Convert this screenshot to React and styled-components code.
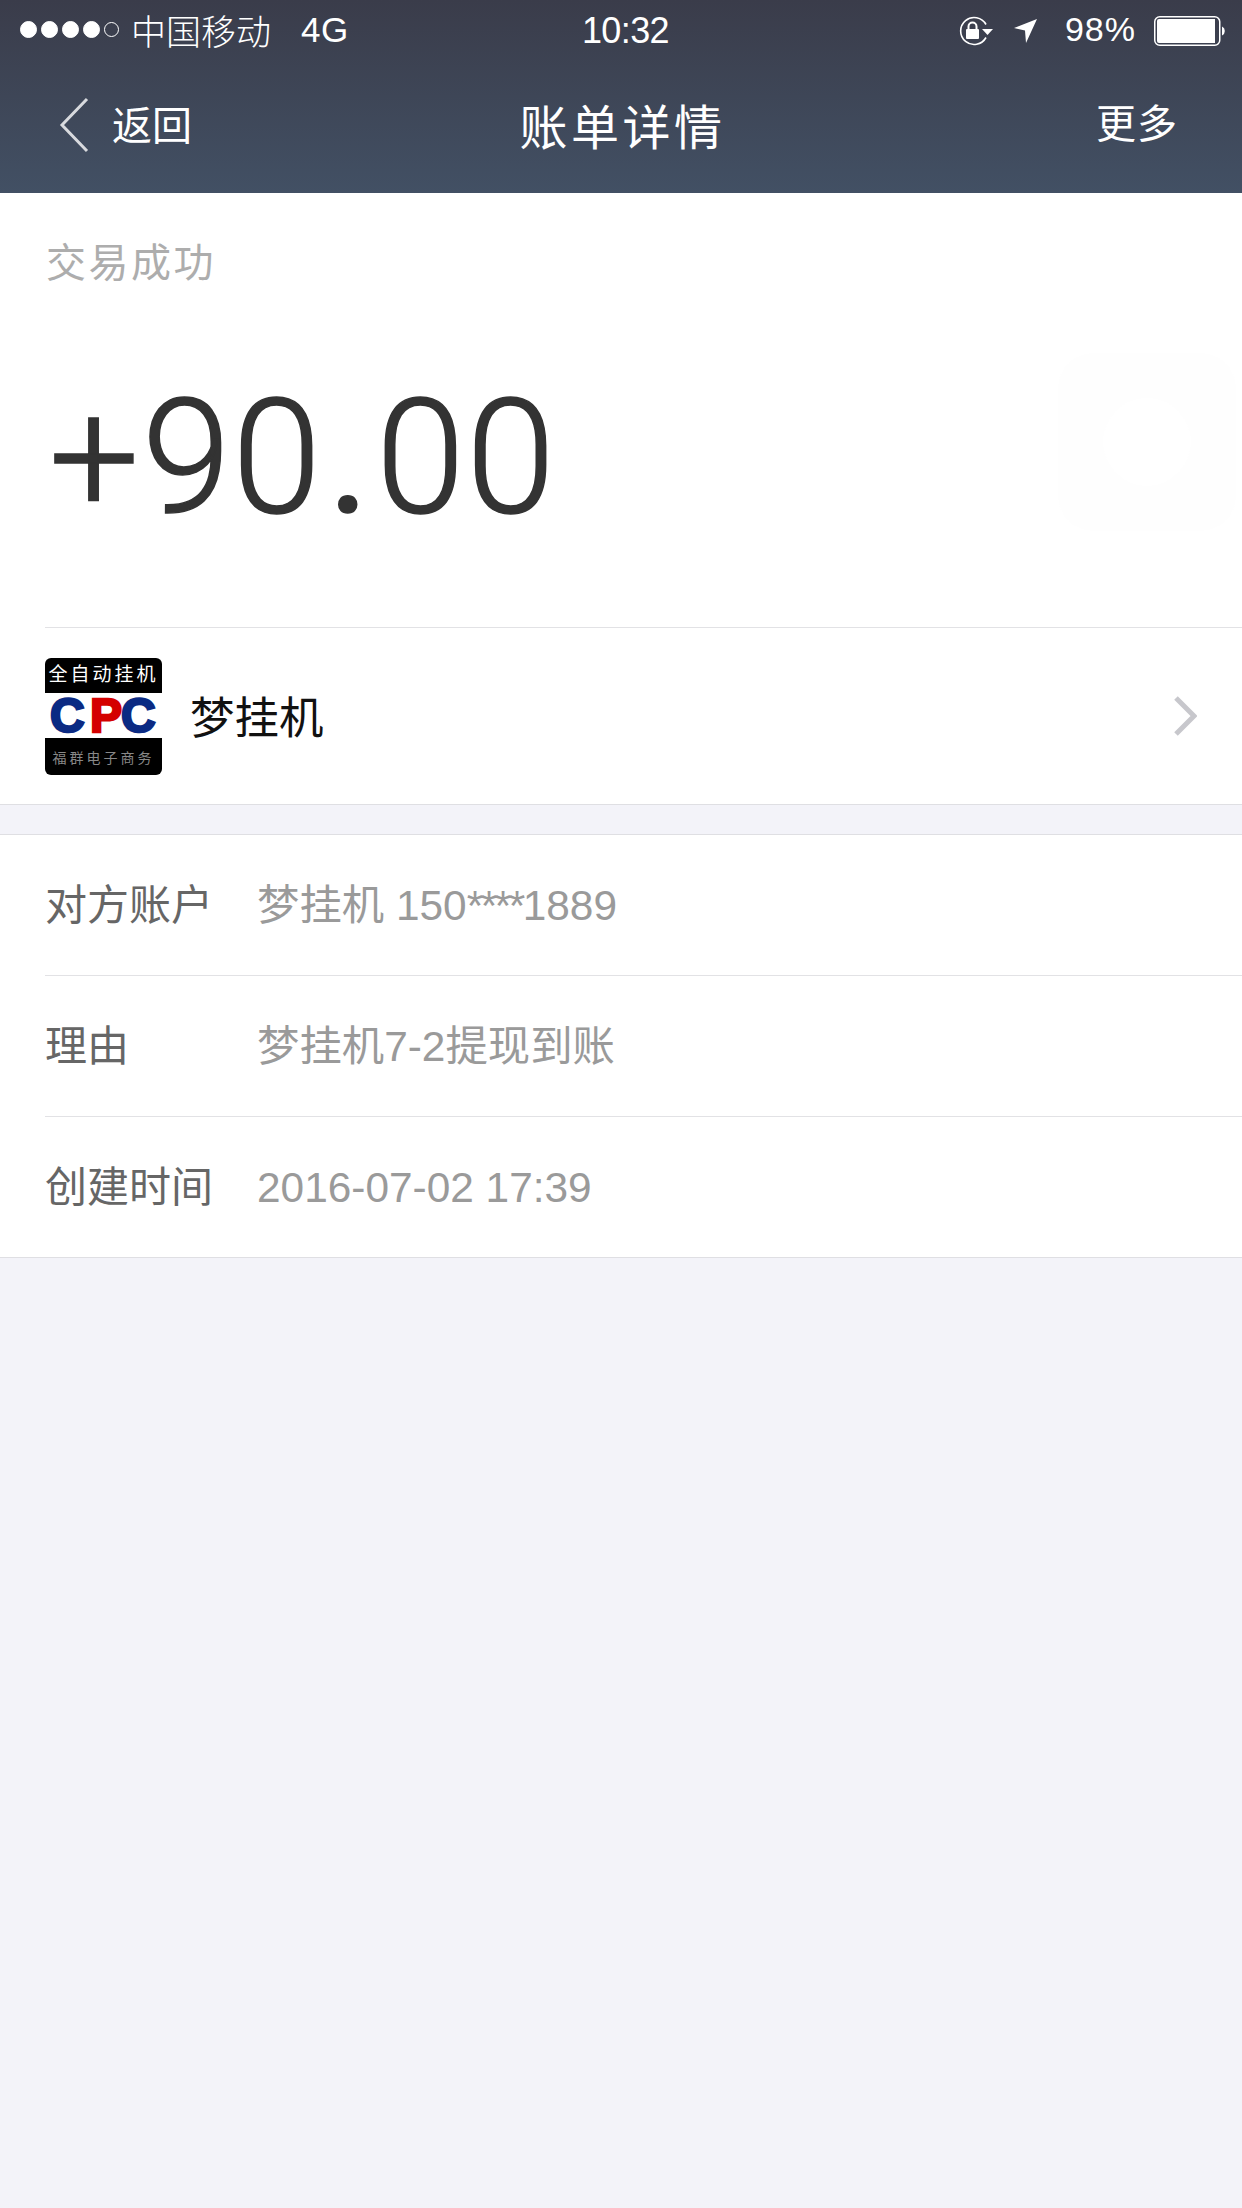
import React from "react";
import styled, { createGlobalStyle } from "styled-components";

const CJK = '"Liberation Sans", "Noto Sans CJK SC", sans-serif';

const Global = createGlobalStyle`
  html, body { margin: 0; padding: 0; background: #f3f3f9; }
  body { font-family: ${CJK}; }
`;
const Page = styled.div`
  width: 1242px; height: 2208px; background: #f3f3f9; display: flex; flex-direction: column; overflow: hidden;
`;
const Header = styled.header`
  height: 193px; box-sizing: border-box; color: #fff; display: flex; flex-direction: column;
  background: linear-gradient(180deg, #3a3c4a 0%, #425064 100%);
`;
const StatusBar = styled.div`
  height: 62px; display: grid; grid-template-columns: 1fr auto 1fr; align-items: center; padding: 0 16px 0 20px;
`;
const StatusLeft = styled.div`display: flex; align-items: center; font-size: 35px; padding-bottom: 3px;`;
const StatusRight = styled.div`display: flex; align-items: center; justify-content: flex-end;`;
const Signal = styled.span`display: flex; align-items: center; gap: 4px; margin-right: 12px;`;
const Dot = styled.i`
  width: ${p => (p.$on ? 17 : 15)}px; height: ${p => (p.$on ? 17 : 15)}px; box-sizing: border-box; border-radius: 50%;
  border: 1.5px solid #fff; background: ${p => (p.$on ? "#fff" : "transparent")};
`;
const Carrier = styled.span`margin-right: 30px; font-weight: 300;`;
const FourG = styled.span`letter-spacing: 0.5px;`;
const Clock = styled.div`font-size: 36px; letter-spacing: -0.6px; padding-left: 5px;`;
const Percent = styled.span`font-size: 34px; margin: 0 18px 0 27px; letter-spacing: 1px; padding-bottom: 3px;`;
const LocationIcon = styled.svg`margin-left: 20px;`;
const NavBar = styled.nav`
  flex: 1; display: grid; grid-template-columns: 1fr auto 1fr; align-items: center; padding: 0 64px 6px 59px;
`;
const Back = styled.div`display: flex; align-items: center; gap: 23px; font-size: 40px;`;
const BackText = styled.span`padding-bottom: 3px;`;
const Title = styled.h1`margin: 0; padding: 0 0 2px 8px; font-size: 48px; font-weight: 400; letter-spacing: 3.5px;`;
const More = styled.div`text-align: right; font-size: 40px; letter-spacing: 1px; padding-bottom: 7px;`;

const Summary = styled.section`
  position: relative; background: #fff; padding-left: 45px; border-bottom: 1px solid #dfdfe3;
`;
const Status = styled.div`
  height: 140px; box-sizing: border-box; display: flex; align-items: center; padding: 0 0 6px 1px;
  font-size: 40px; letter-spacing: 2.5px; color: #adadad;
`;
const Amount = styled.div`
  height: 294px; display: flex; align-items: center; padding-bottom: 46px; box-sizing: border-box;
  font-size: 160px; letter-spacing: 1.5px; color: #333; font-family: Roboto, "Liberation Sans", sans-serif; font-weight: 300;
  -webkit-text-stroke: 1.5px #333;
`;
const Sign = styled.span`margin: 0 1px 0 4px;`;
const Point = styled.span`padding: 0 5px; font-weight: 400;`;
const Watermark = styled.div`
  position: absolute; left: 1058px; top: 160px; width: 178px; height: 178px; border-radius: 36px;
  background: #fefefe; display: flex; align-items: center; justify-content: center;
  &::after { content: ""; width: 88px; height: 88px; border-radius: 50%; background: #fff; }
`;
const Merchant = styled.div`
  height: 176px; display: flex; align-items: center; border-top: 1px solid #e2e2e5; padding-right: 45px;
`;
const Logo = styled.svg`width: 117px; height: 117px; flex: none; display: block;`;
const MerchantName = styled.div`flex: 1; margin-left: 28px; padding-bottom: 4px; font-size: 44.5px; color: #111;`;
const Details = styled.section`
  margin-top: 29px; background: #fff; padding-left: 45px;
  border-top: 1px solid #dfdfe3; border-bottom: 1px solid #dfdfe3;
`;
const Row = styled.div`
  box-sizing: border-box; height: 141px; display: flex; align-items: center; padding-top: 1px;
  &:first-child { height: 140px; }
  & + & { border-top: 1px solid #e2e2e5; }
`;
const Label = styled.div`width: 212px; font-size: 42px; line-height: 50px; color: #666; white-space: nowrap;`;
const Value = styled.div`font-size: 42.4px; line-height: 50px; color: #9a9a9a; white-space: nowrap;`;
const Mask = styled.span`letter-spacing: -2.5px;`;

const rows = [
  ["对方账户", <>梦挂机 150<Mask>****</Mask>1889</>],
  ["理由", "梦挂机7-2提现到账"],
  ["创建时间", "2016-07-02 17:39"],
];

export default function App() {
  return (
    <Page>
      <Global />
      <Header>
        <StatusBar>
          <StatusLeft>
            <Signal>
              {[1, 1, 1, 1, 0].map((on, i) => <Dot key={i} $on={!!on} />)}
            </Signal>
            <Carrier>中国移动</Carrier>
            <FourG>4G</FourG>
          </StatusLeft>
          <Clock>10:32</Clock>
          <StatusRight>
            <svg width="36" height="32" viewBox="0 0 36 32" fill="none">
              <path d="M28 22.500a13.500 13.500 0 1 1 0-13" stroke="#fff" strokeWidth="1.600" />
              <path d="M24 14h11l-5.500 6z" fill="#fff" />
              <rect x="8" y="14" width="13" height="10" rx="1" fill="#fff" />
              <path d="M10.500 14v-2.500a4 4 0 0 1 8 0V14" stroke="#fff" strokeWidth="2" />
            </svg>
            <LocationIcon width="24" height="26" viewBox="0 0 24 26">
              <path d="M0 10 23 1 12 25l-1-12.500z" fill="#fff" />
            </LocationIcon>
            <Percent>98%</Percent>
            <svg width="72" height="30" viewBox="0 0 72 30" fill="none">
              <rect x="0.750" y="0.750" width="65" height="28.500" rx="5" stroke="#fff" strokeWidth="1.500" />
              <path d="M3 5a2 2 0 0 1 2-2h56v24H5a2 2 0 0 1-2-2z" fill="#fff" />
              <path d="M68 10.500a5 5 0 0 1 0 9z" fill="#fff" />
            </svg>
          </StatusRight>
        </StatusBar>
        <NavBar>
          <Back>
            <svg width="30" height="56" viewBox="0 0 30 56" fill="none">
              <path d="M28 2 3 28l25 26" stroke="#d8dade" strokeWidth="3" />
            </svg>
            <BackText>返回</BackText>
          </Back>
          <Title>账单详情</Title>
          <More>更多</More>
        </NavBar>
      </Header>
      <Summary>
        <Status>交易成功</Status>
        <Amount><Sign>+</Sign>90<Point>.</Point>00</Amount>
        <Watermark />
        <Merchant>
          <Logo viewBox="0 0 117 117">
            <rect width="117" height="117" rx="6" fill="#000" />
            <rect y="35" width="117" height="45" fill="#fff" />
            <text x="58.500" y="23" textAnchor="middle" fill="#fff" fontSize="19" letterSpacing="3" fontFamily="Noto Sans CJK SC">全自动挂机</text>
            <text x="5" y="74" fontSize="48" fontWeight="700" fontFamily="Liberation Sans" fill="#0b2a83" stroke="#0b2a83" strokeWidth="2.500">C</text>
            <text x="45" y="74" fontSize="48" fontWeight="700" fontFamily="Liberation Sans" fill="#d40000" stroke="#d40000" strokeWidth="2.500">P</text>
            <text x="76" y="74" fontSize="48" fontWeight="700" fontFamily="Liberation Sans" fill="#0b2a83" stroke="#0b2a83" strokeWidth="2.500">C</text>
            <text x="58.500" y="105" textAnchor="middle" fill="#888" fontSize="14" letterSpacing="3" fontFamily="Noto Sans CJK SC">福群电子商务</text>
          </Logo>
          <MerchantName>梦挂机</MerchantName>
          <svg width="24" height="40" viewBox="0 0 24 40" fill="none">
            <path d="M3 2l18 18L3 38" stroke="#c7c7cc" strokeWidth="5" />
          </svg>
        </Merchant>
      </Summary>
      <Details>
        {rows.map(([k, v]) => (
          <Row key={k}>
            <Label>{k}</Label>
            <Value>{v}</Value>
          </Row>
        ))}
      </Details>
    </Page>
  );
}
